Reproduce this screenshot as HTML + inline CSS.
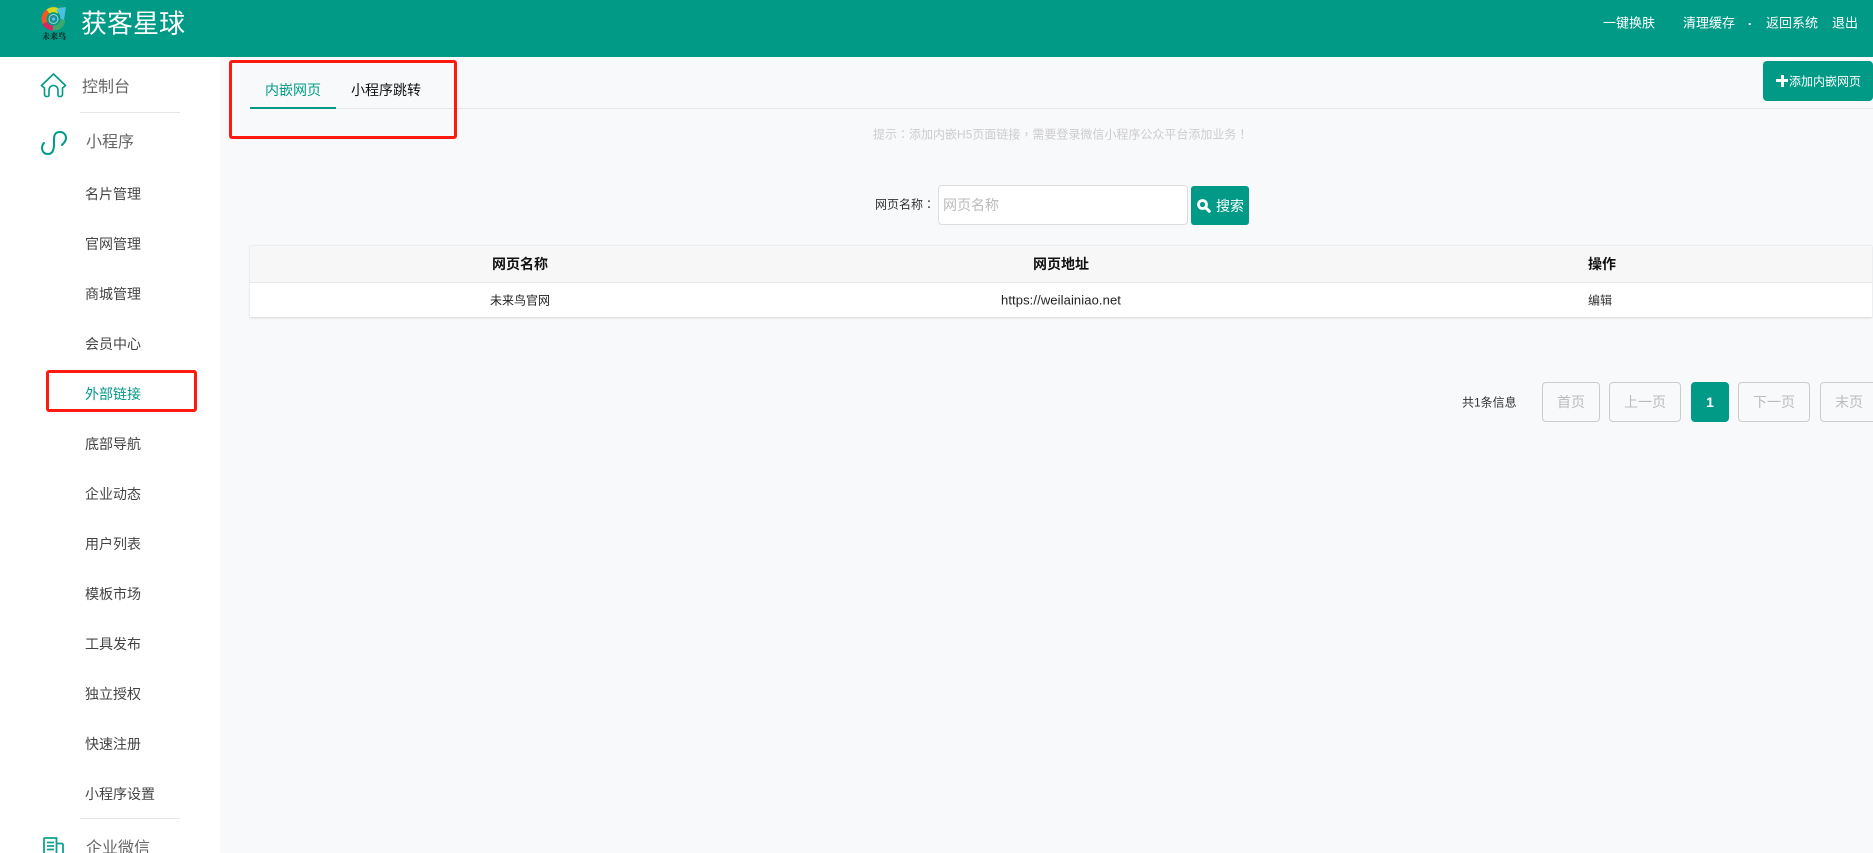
<!DOCTYPE html>
<html lang="zh"><head><meta charset="utf-8"><title>获客星球</title>
<style>
*{box-sizing:border-box;margin:0;padding:0}
html,body{width:1873px;height:853px;overflow:hidden;background:#f8f9fb}
body{position:relative;font-family:"Liberation Sans","Noto Sans CJK SC",sans-serif;font-size:14px;color:#333;text-spacing-trim:space-all}
.a{position:absolute;white-space:nowrap}
.c{transform:translate(-50%,-50%)}
.m{transform:translateY(-50%)}
.item{left:85px;color:#444;font-size:14px}
.pg{top:382px;height:40px;border:1px solid #ccc;border-radius:4px;color:#bbb;font-size:14px;display:flex;align-items:center;justify-content:center;background:transparent}
.red{border:3px solid #ff1a10;border-radius:3px}
.p{font-family:"Noto Sans CJK TC",sans-serif}
</style></head><body>
<div class="a" style="left:0;top:0;width:1873px;height:57px;background:#009a87"></div>
<svg class="a" style="left:40px;top:5px" width="28" height="28" viewBox="0 0 28 28" fill="none">
<path d="M4.900 18A9 9 0 0 1 8 6.500" stroke="#ee5a24" stroke-width="5"/>
<path d="M8 6.500A9 9 0 0 1 19 6.500" stroke="#d8d81e" stroke-width="5"/>
<path d="M4.900 18A9 9 0 0 0 13 23" stroke="#d9275f" stroke-width="5"/>
<path d="M13 23A9 9 0 0 0 22.800 15" stroke="#3ca96a" stroke-width="5"/>
<path d="M18 3L26 2L24 15L20.500 14C20.500 10 19 7.500 16.500 6Z" fill="#4cc0de"/>
<circle cx="13.500" cy="14" r="5" fill="#9fdccf"/><circle cx="13.500" cy="14" r="4" fill="#1f8d9a"/><circle cx="13.500" cy="14" r="1.500" fill="#63c8ee"/>
</svg>
<div class="a" style="left:40px;top:31px;width:28px;font-size:8px;line-height:11px;color:#0c2a26;font-family:'Noto Serif CJK SC',serif;font-weight:900;text-align:center">未来鸟</div>
<div class="a m" style="left:81px;top:22px;font-size:26px;color:#fff">获客星球</div>
<div class="a m" style="left:1603px;top:22px;font-size:13px;color:#fff">一键换肤</div>
<div class="a m" style="left:1683px;top:22px;font-size:13px;color:#fff">清理缓存</div>
<div class="a c" style="left:1750px;top:24px;font-size:13px;color:#fff;font-weight:700">·</div>
<div class="a m" style="left:1766px;top:22px;font-size:13px;color:#fff">返回系统</div>
<div class="a m" style="left:1832px;top:22px;font-size:13px;color:#fff">退出</div>

<div class="a" style="left:0;top:57px;width:220px;height:796px;background:#fff"></div>
<svg class="a" style="left:40px;top:72px" width="27" height="27" viewBox="0 0 27 27" fill="none" stroke="#009a87" stroke-width="1.600" stroke-linejoin="round" stroke-linecap="round">
<path d="M1.500 13.500L13.500 2L25.500 13.500L22.500 16V22.500A2 2 0 0 1 20.500 24.500H19.500A1.500 1.500 0 0 1 18 23V18A4.500 4.500 0 0 0 9 18V23A1.500 1.500 0 0 1 7.500 24.500H6.500A2 2 0 0 1 4.500 22.500V16Z"/>
</svg>
<svg class="a" style="left:40px;top:130px" width="27" height="26" viewBox="0 0 27 26" fill="none" stroke="#009a87" stroke-width="2" stroke-linecap="round">
<path d="M4 13C1 16 1 24 8 24C13 24 14 19 14 14V10C14 5 15 2 20 2C24 2 26 5 26 8C26 11 24 13 22 15"/>
</svg>
<div class="a m" style="left:82px;top:85px;font-size:16px;color:#666">控制台</div>
<div class="a" style="left:80px;top:112px;width:100px;height:1px;background:#e6e6e6"></div>
<div class="a m" style="left:86px;top:140px;font-size:16px;color:#666">小程序</div>
<div class="a m item" style="top:194px">名片管理</div>
<div class="a m item" style="top:244px">官网管理</div>
<div class="a m item" style="top:294px">商城管理</div>
<div class="a m item" style="top:344px">会员中心</div>
<div class="a m item" style="top:394px;color:#009a87">外部链接</div>
<div class="a m item" style="top:444px">底部导航</div>
<div class="a m item" style="top:494px">企业动态</div>
<div class="a m item" style="top:544px">用户列表</div>
<div class="a m item" style="top:594px">模板市场</div>
<div class="a m item" style="top:644px">工具发布</div>
<div class="a m item" style="top:694px">独立授权</div>
<div class="a m item" style="top:744px">快速注册</div>
<div class="a m item" style="top:794px">小程序设置</div>
<div class="a" style="left:80px;top:818px;width:100px;height:1px;background:#e6e6e6"></div>
<svg class="a" style="left:42px;top:836px" width="24" height="17" viewBox="0 0 24 17" fill="none" stroke="#11a08f" stroke-width="1.800">
<path d="M2 17V3A1 1 0 0 1 3 2H14.500V17M14.500 7.500H19.500C20.500 7.500 21 8 21 9V17M5 6.500H12M5 10H12M5 13.500H12"/>
</svg>
<div class="a m" style="left:86px;top:846px;font-size:16px;color:#666">企业微信</div>

<div class="a" style="left:250px;top:108px;width:1623px;height:1px;background:#e6e6e6"></div>
<div class="a" style="left:250px;top:107px;width:86px;height:2px;background:#009a87"></div>
<div class="a m" style="left:265px;top:90px;color:#009a87">内嵌网页</div>
<div class="a m" style="left:351px;top:90px;color:#111">小程序跳转</div>
<div class="a" style="left:1763px;top:61px;width:110px;height:40px;background:#009a87;border-radius:4px"></div>
<div class="a" style="left:1776px;top:79px;width:12px;height:3px;background:#fff"></div>
<div class="a" style="left:1781px;top:75px;width:3px;height:12px;background:#fff"></div>
<div class="a m" style="left:1789px;top:81px;font-size:12px;color:#fff">添加内嵌网页</div>
<div class="a m" style="left:873px;top:134px;font-size:12px;color:#ccc">提示<span class="p" lang="zh-Hant">：</span>添加内嵌H5页面链接<span class="p" lang="zh-Hant">，</span>需要登录微信小程序公众平台添加业务<span class="p" lang="zh-Hant">！</span></div>

<div class="a m" style="left:875px;top:204px;font-size:12px;color:#333">网页名称<span class="p" lang="zh-Hant">：</span></div>
<div class="a" style="left:938px;top:185px;width:250px;height:40px;background:#fff;border:1px solid #ddd;border-radius:4px"></div>
<div class="a m" style="left:943px;top:205px;color:#bbb">网页名称</div>
<div class="a" style="left:1191px;top:186px;width:58px;height:39px;background:#009a87;border-radius:3px"></div>
<svg class="a" style="left:1197px;top:199px" width="14" height="14" viewBox="0 0 14 14" fill="none" stroke="#fff">
<circle cx="5.500" cy="5.500" r="4" stroke-width="2.800"/><path d="M9.300 9.300L12.300 12.300" stroke-width="3" stroke-linecap="round"/>
</svg>
<div class="a m" style="left:1216px;top:206px;color:#fff">搜索</div>

<div class="a" style="left:250px;top:245px;width:1622px;height:72px;background:#fff;box-shadow:0 1px 2px rgba(0,0,0,.14)"></div>
<div class="a" style="left:250px;top:245px;width:1622px;height:38px;background:#f7f7f7;border-top:1px solid #eee;border-bottom:1px solid #e9e9e9"></div>
<div class="a c" style="left:520px;top:264px;color:#111;font-weight:700">网页名称</div>
<div class="a c" style="left:1061px;top:264px;color:#111;font-weight:700">网页地址</div>
<div class="a c" style="left:1602px;top:264px;color:#111;font-weight:700">操作</div>
<div class="a c" style="left:520px;top:300px;font-size:12px;color:#222">未来鸟官网</div>
<div class="a c" style="left:1061px;top:300px;font-size:13px;letter-spacing:.1px;color:#222">https://weilainiao.net</div>
<div class="a c" style="left:1600px;top:300px;font-size:12px;color:#333">编辑</div>

<div class="a m" style="left:1462px;top:402px;font-size:12px;color:#333">共1条信息</div>
<div class="a pg" style="left:1542px;width:58px">首页</div>
<div class="a pg" style="left:1609px;width:72px">上一页</div>
<div class="a pg" style="left:1691px;width:38px;background:#009a87;border-color:#009a87;color:#fff;font-weight:700">1</div>
<div class="a pg" style="left:1738px;width:72px">下一页</div>
<div class="a pg" style="left:1820px;width:58px">末页</div>

<div class="a red" style="left:229px;top:60px;width:228px;height:79px"></div>
<div class="a red" style="left:46px;top:370px;width:151px;height:42px"></div>
</body></html>
